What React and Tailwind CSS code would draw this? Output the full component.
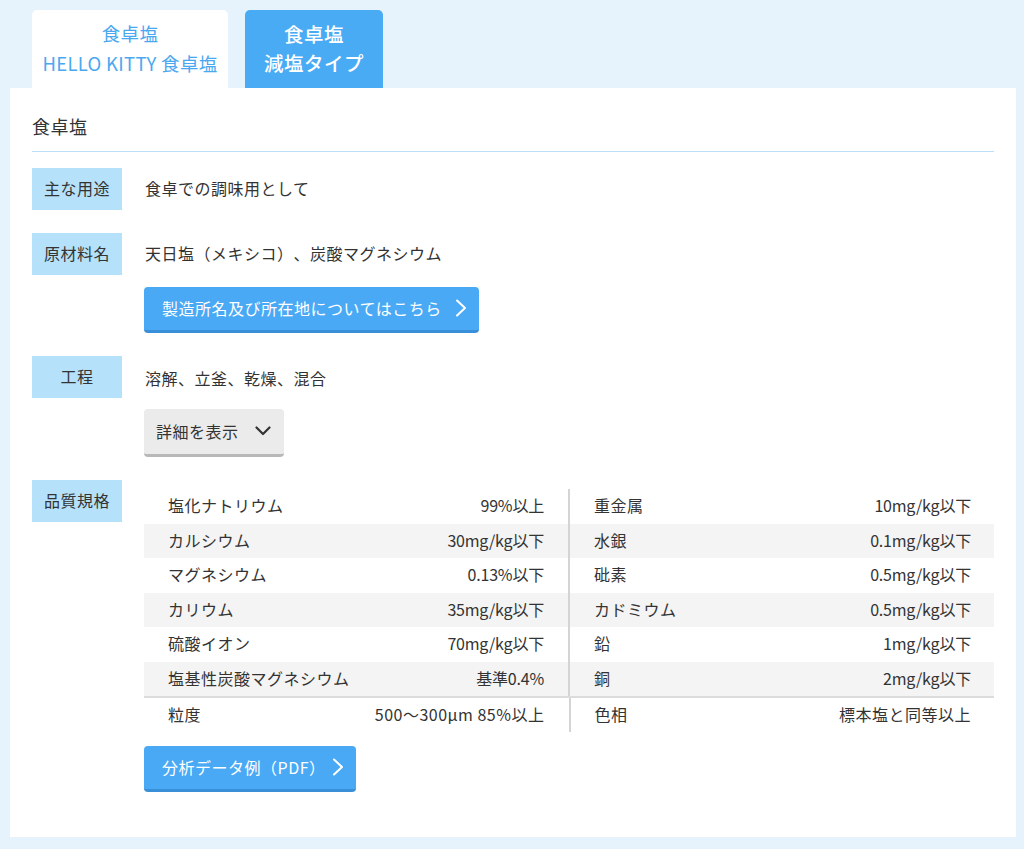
import React from "react";

const FONT = { fontFamily: '"Noto Sans CJK JP", "Noto Sans", sans-serif' };

function ChevronRight() {
  return (
    <svg width="12" height="18" viewBox="0 0 12 18" className="shrink-0">
      <polyline points="2,1.5 10,9 2,16.5" fill="none" stroke="white" strokeWidth="2" strokeLinecap="round" strokeLinejoin="round" />
    </svg>
  );
}

function ChevronDown() {
  return (
    <svg width="16" height="10" viewBox="0 0 16 10" className="shrink-0">
      <polyline points="1.5,1.5 8,8 14.5,1.5" fill="none" stroke="#333" strokeWidth="2.2" strokeLinecap="round" strokeLinejoin="round" />
    </svg>
  );
}

function Label({ children }) {
  return (
    <div className="w-[90px] h-[42px] shrink-0 bg-[#b6e1fa] flex items-center justify-center pb-[3px] text-[16px] text-[#333]">
      {children}
    </div>
  );
}

function BlueButton({ children, width }) {
  return (
    <div className={`${width} h-[46px] rounded-[4px] bg-[#4aa9f4] border-b-[3px] border-[#3a8fd9] flex items-center justify-between pl-[18px] pr-[12px] pb-[2px] text-white text-[16px]`}>
      <span>{children}</span>
      <ChevronRight />
    </div>
  );
}

const left = [
  ["塩化ナトリウム", "99%以上"],
  ["カルシウム", "30mg/kg以下"],
  ["マグネシウム", "0.13%以下"],
  ["カリウム", "35mg/kg以下"],
  ["硫酸イオン", "70mg/kg以下"],
  ["塩基性炭酸マグネシウム", "基準0.4%"],
];
const right = [
  ["重金属", "10mg/kg以下"],
  ["水銀", "0.1mg/kg以下"],
  ["砒素", "0.5mg/kg以下"],
  ["カドミウム", "0.5mg/kg以下"],
  ["鉛", "1mg/kg以下"],
  ["銅", "2mg/kg以下"],
];

function Col({ rows, isRight }) {
  return (
    <div className={`flex-1 flex flex-col ${isRight ? "border-l-2 border-[#d4d4d4]" : ""}`}>
      {rows.map(([k, v], i) => (
        <div
          key={k}
          className={`h-[34.5px] flex items-center justify-between pb-[2px] ${isRight ? "pl-[24px] pr-[23px]" : "pl-[24px] pr-[24px]"} ${i % 2 === 1 ? "bg-[#f4f4f4]" : "bg-white"}`}
        >
          <span>{k}</span>
          <span className="tracking-[-0.2px]">{v}</span>
        </div>
      ))}
    </div>
  );
}

export default function App() {
  return (
    <div style={FONT} className="min-h-[849px] bg-[#e6f3fc] pt-[10px] pl-[10px] pr-[8px] pb-[12px] text-[#333] tracking-[0.5px] [text-spacing-trim:space-all]">
      <div className="flex gap-[17px] ml-[22px]">
        <div className="w-[196px] h-[78px] bg-white rounded-t-[5px] flex flex-col items-center justify-center pb-[2px] text-[#4aa8f0] text-[18.5px] leading-[30px] tracking-[0.3px]">
          <div>食卓塩</div>
          <div>HELLO KITTY 食卓塩</div>
        </div>
        <div className="w-[138px] h-[78px] bg-[#4aabf5] rounded-t-[5px] flex flex-col items-center justify-center pb-[2px] text-white text-[19.5px] font-medium leading-[29px] tracking-[0.5px]">
          <div>食卓塩</div>
          <div>減塩タイプ</div>
        </div>
      </div>
      <div className="bg-white px-[22px] pt-[24px] pb-[45px]">
        <div className="text-[18px] leading-[28px] pb-[11px] border-b border-[#bcdff8]">食卓塩</div>
        <div className="flex flex-col gap-[23px] mt-[16px] text-[16px]">
          <div className="flex">
            <Label>主な用途</Label>
            <div className="ml-[22px] leading-[40px] pl-[1px]">食卓での調味用として</div>
          </div>
          <div className="flex">
            <Label>原材料名</Label>
            <div className="ml-[22px] flex flex-col">
              <div className="h-[42px] leading-[40px] pl-[1px]">天日塩（メキシコ）、炭酸マグネシウム</div>
              <div className="mt-[12px]">
                <BlueButton width="w-[335px]">製造所名及び所在地についてはこちら</BlueButton>
              </div>
            </div>
          </div>
          <div className="flex">
            <Label>工程</Label>
            <div className="ml-[22px] flex flex-col">
              <div className="h-[46px] leading-[44px] pl-[1px]">溶解、立釜、乾燥、混合</div>
              <div className="mt-[7px] w-[140px] h-[48px] rounded-[4px] bg-[#ebebeb] border-b-[3px] border-[#b8b8b8] flex items-center justify-between pl-[12px] pr-[13px] pb-[2px]">
                <span>詳細を表示</span>
                <ChevronDown />
              </div>
            </div>
          </div>
          <div className="flex">
            <Label>品質規格</Label>
            <div className="ml-[22px] flex-1 flex flex-col pt-[9px]">
              <div className="flex flex-col">
                <div className="flex">
                  <Col rows={left} />
                  <Col rows={right} isRight />
                </div>
                <div className="flex border-t-2 border-[#dcdcdc]">
                  <div className="flex-1 h-[34px] flex items-center justify-between pl-[24px] pr-[24px] pb-[2px]">
                    <span>粒度</span>
                    <span>500～300μm 85%以上</span>
                  </div>
                  <div className="flex-1 h-[34px] flex items-center justify-between pl-[24px] pr-[23px] pb-[2px] border-l-2 border-[#d4d4d4]">
                    <span>色相</span>
                    <span>標本塩と同等以上</span>
                  </div>
                </div>
              </div>
              <div className="mt-[14px]">
                <BlueButton width="w-[212px]">分析データ例（PDF）</BlueButton>
              </div>
            </div>
          </div>
        </div>
      </div>
    </div>
  );
}
